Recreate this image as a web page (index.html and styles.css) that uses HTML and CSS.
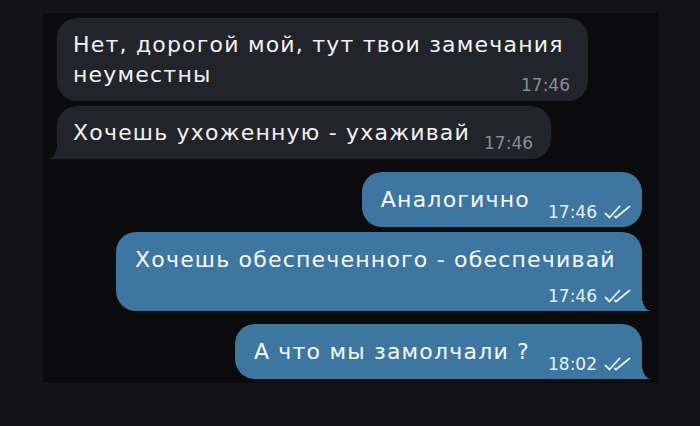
FILE: index.html
```html
<!DOCTYPE html>
<html lang="ru">
<head>
<meta charset="utf-8">
<title>Чат</title>
<link rel="stylesheet" href="styles.css">
</head>
<body>
<div class="screen">
  <div class="chat">
    <div class="group in">
      <div class="bubble full">
        <span class="text line">Нет, дорогой мой, тут твои замечания</span><span class="text">неуместны</span><span class="meta"><span class="time">17:46</span></span>
      </div>
      <div class="bubble tail">
        <span class="text">Хочешь ухоженную - ухаживай</span><span class="meta"><span class="time">17:46</span></span>
      </div>
    </div>
    <div class="group out">
      <div class="bubble">
        <span class="text">Аналогично</span><span class="meta"><span class="time">17:46</span><svg class="check" viewBox="0 0 28 14" width="28" height="14"><path d="M1.5 8.5 L5.5 12.5 L15.5 1.5"/><path d="M11 11.5 L12 12.5 L25.5 1.5"/></svg></span>
      </div>
      <div class="bubble tail wide">
        <span class="text">Хочешь обеспеченного - обеспечивай</span><span class="meta"><span class="time">17:46</span><svg class="check" viewBox="0 0 28 14" width="28" height="14"><path d="M1.5 8.5 L5.5 12.5 L15.5 1.5"/><path d="M11 11.5 L12 12.5 L25.5 1.5"/></svg></span>
      </div>
    </div>
    <div class="group out">
      <div class="bubble tail">
        <span class="text">А что мы замолчали ?</span><span class="meta"><span class="time">18:02</span><svg class="check" viewBox="0 0 28 14" width="28" height="14"><path d="M1.5 8.5 L5.5 12.5 L15.5 1.5"/><path d="M11 11.5 L12 12.5 L25.5 1.5"/></svg></span>
      </div>
    </div>
  </div>
</div>
</body>
</html>
```

FILE: styles.css
```css
html, body {
  margin: 0;
  padding: 0;
}
body {
  background: #141416;
  width: 700px;
  height: 426px;
  overflow: hidden;
  font-family: "DejaVu Sans", Roboto, sans-serif;
}
.screen {
  padding: 13px 42px 43px 43px;
}
.chat {
  background: #0b0b0d;
  height: 370px;
  padding: 5px 16px 0 14px;
  box-sizing: border-box;
  display: flex;
  flex-direction: column;
  gap: 13px;
}
.group {
  display: flex;
  flex-direction: column;
  gap: 5px;
}
.group.in {
  align-items: flex-start;
}
.group.out {
  align-items: flex-end;
}
.bubble {
  position: relative;
  max-width: 531px;
  box-sizing: border-box;
  padding: 12px 18px 7px 16px;
  border-radius: 20px;
  font-size: 22px;
  line-height: 30px;
  letter-spacing: 1.2px;
  color: #f2f2f2;
}
.bubble.full {
  width: 531px;
}
.text.line {
  display: block;
}
.in .bubble {
  background: #22242c;
}
.out .bubble {
  background: #3d77a1;
  padding: 13px 10px 6px 19px;
  color: #f7fbff;
}
.meta {
  float: right;
  margin-top: 16px;
  margin-left: 14px;
  font-size: 17px;
  line-height: 18px;
  letter-spacing: 0;
  display: flex;
  align-items: center;
  gap: 7px;
}
.out .meta {
  margin-top: 18px;
  margin-left: 18px;
}
.in .meta {
  color: #8a8d96;
}
.out .meta {
  color: #e8f0f6;
}
.check {
  fill: none;
  stroke: #e8f0f6;
  stroke-width: 1.8;
  stroke-linecap: round;
  stroke-linejoin: round;
}
.bubble.wide {
  max-width: 526px;
}
.out .bubble.wide .meta {
  margin-top: 12px;
}
.in .bubble.tail {
  border-bottom-left-radius: 0;
}
.out .bubble.tail {
  border-bottom-right-radius: 0;
}
.in .bubble.tail::before {
  content: "";
  position: absolute;
  left: -9px;
  bottom: 0;
  width: 9px;
  height: 14px;
  background: radial-gradient(ellipse 9px 14px at 0 0, transparent 97%, #22242c 100%);
}
.out .bubble.tail::after {
  content: "";
  position: absolute;
  right: -9px;
  bottom: 0;
  width: 9px;
  height: 14px;
  background: radial-gradient(ellipse 9px 14px at 100% 0, transparent 97%, #3d77a1 100%);
}
```
